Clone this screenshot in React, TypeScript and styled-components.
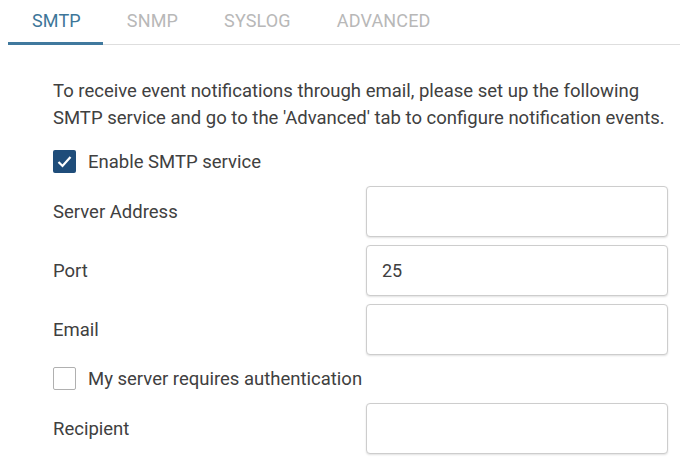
import { useState } from 'react';
import styled, { createGlobalStyle } from 'styled-components';

const GlobalStyle = createGlobalStyle`
  body {
    margin: 0;
    background: #fff;
    font-family: Roboto, 'Liberation Sans', sans-serif;
    color: #404040;
  }
`;

const Page = styled.div`
  width: 681px;
  height: 459px;
  overflow: hidden;
  padding: 0 1px 0 8px;
  box-sizing: border-box;
`;

const TabBar = styled.div`
  display: flex;
  height: 45px;
  border-bottom: 1px solid #dedede;
  box-sizing: border-box;
`;

const Tab = styled.div<{ $active?: boolean }>`
  display: flex;
  align-items: center;
  padding: 0 22px 2px 24px;
  font-size: 18px;
  letter-spacing: 0.15px;
  color: ${(p) => (p.$active ? '#3d7699' : '#b8b8b8')};
  border-bottom: 3px solid ${(p) => (p.$active ? '#40799e' : 'transparent')};
  margin-bottom: -1px;
`;

const Content = styled.div`
  padding: 33px 0 0 45px;
  display: flex;
  flex-direction: column;
`;

const Intro = styled.p`
  margin: 0;
  font-size: 18.5px;
  line-height: 27px;
  white-space: nowrap;
`;

const CheckRow = styled.label<{ $top: number }>`
  display: flex;
  align-items: center;
  gap: 12px;
  height: 23px;
  margin-top: ${(p) => p.$top}px;
  font-size: 18.5px;
  white-space: nowrap;
`;

const Box = styled.span<{ $checked?: boolean }>`
  width: 23px;
  height: 23px;
  flex: none;
  box-sizing: border-box;
  border-radius: 2px;
  display: flex;
  align-items: center;
  justify-content: center;
  background: ${(p) => (p.$checked ? '#1f4d7a' : '#fff')};
  border: ${(p) => (p.$checked ? 'none' : '1.5px solid #b0b0b0')};
`;

const Fields = styled.div<{ $top: number }>`
  display: flex;
  flex-direction: column;
  gap: 8px;
  margin-top: ${(p) => p.$top}px;
`;

const FieldRow = styled.div`
  display: grid;
  grid-template-columns: 313px 302px;
  align-items: center;
`;

const Label = styled.span`
  font-size: 18.5px;
`;

const Input = styled.input`
  height: 51px;
  box-sizing: border-box;
  border: 1px solid #cdcdcd;
  border-radius: 4px;
  box-shadow: 0 1px 2px rgba(0, 0, 0, 0.12);
  padding: 0 15px;
  font-family: inherit;
  font-size: 18px;
  color: #404040;
  outline: none;
`;

const Check = () => (
  <svg width="15" height="13" viewBox="0 0 15 13">
    <path d="M1.5 7 L5.5 11 L13.5 2" fill="none" stroke="#fff" strokeWidth="2.2" />
  </svg>
);

export default function App() {
  const [enabled, setEnabled] = useState(true);
  const [auth, setAuth] = useState(false);
  return (
    <Page>
      <GlobalStyle />
      <TabBar>
        <Tab $active>SMTP</Tab>
        <Tab>SNMP</Tab>
        <Tab>SYSLOG</Tab>
        <Tab>ADVANCED</Tab>
      </TabBar>
      <Content>
        <Intro>
          To receive event notifications through email, please set up the following
          <br />
          SMTP service and go to the 'Advanced' tab to configure notification events.
        </Intro>
        <CheckRow $top={18} onClick={() => setEnabled(!enabled)}>
          <Box $checked={enabled}>{enabled && <Check />}</Box>
          Enable SMTP service
        </CheckRow>
        <Fields $top={13}>
          <FieldRow>
            <Label>Server Address</Label>
            <Input />
          </FieldRow>
          <FieldRow>
            <Label>Port</Label>
            <Input defaultValue="25" />
          </FieldRow>
          <FieldRow>
            <Label>Email</Label>
            <Input />
          </FieldRow>
        </Fields>
        <CheckRow $top={12} onClick={() => setAuth(!auth)}>
          <Box $checked={auth}>{auth && <Check />}</Box>
          My server requires authentication
        </CheckRow>
        <Fields $top={13}>
          <FieldRow>
            <Label>Recipient</Label>
            <Input />
          </FieldRow>
        </Fields>
      </Content>
    </Page>
  );
}
